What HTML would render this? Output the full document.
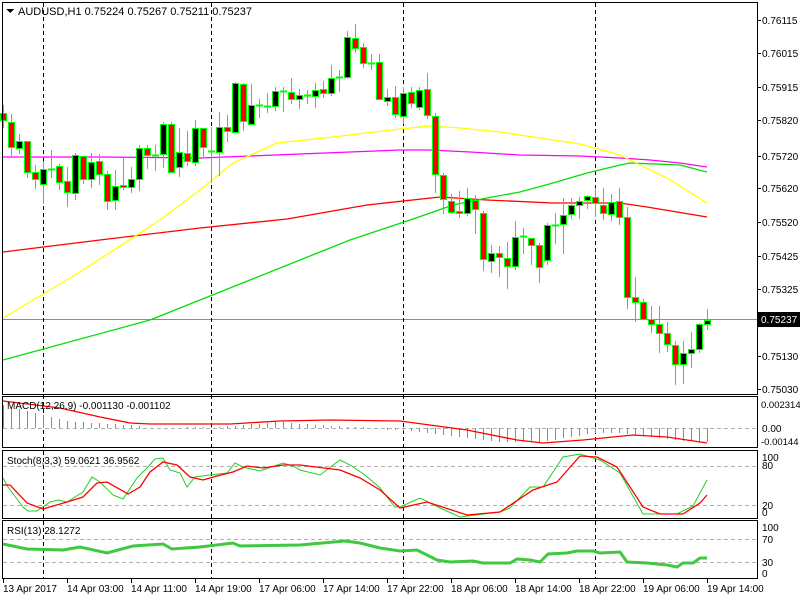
<!DOCTYPE html>
<html><head><meta charset="utf-8"><style>
html,body{margin:0;padding:0;background:#fff;width:800px;height:600px;overflow:hidden}
svg{display:block}
text{font-family:"Liberation Sans",sans-serif;font-size:10px;fill:#000}
</style></head><body>
<svg id="s" width="800" height="600" viewBox="0 0 800 600" xmlns="http://www.w3.org/2000/svg" shape-rendering="crispEdges">
<rect width="800" height="600" fill="#fff"/>
<g id="g"></g>
<g fill="none" stroke="#000" stroke-width="1">
<rect x="2.5" y="2.5" width="755" height="392"/>
<rect x="2.5" y="396.5" width="755" height="51"/>
<rect x="2.5" y="450.5" width="755" height="68"/>
<rect x="2.5" y="520.5" width="755" height="58"/>
</g>
<rect x="758" y="312" width="42" height="15" fill="#000"/>
<text x="761" y="323" style="fill:#fff">0.75237</text>
<g>
<text x="762" y="24">0.76115</text>
<text x="762" y="57">0.76015</text>
<text x="762" y="91">0.75915</text>
<text x="762" y="124">0.75820</text>
<text x="762" y="160">0.75720</text>
<text x="762" y="192">0.75620</text>
<text x="762" y="226">0.75520</text>
<text x="762" y="260">0.75425</text>
<text x="762" y="293">0.75325</text>
<text x="762" y="360">0.75130</text>
<text x="762" y="393">0.75030</text>
<text x="761" y="408" style="font-size:9.5px">0.002314</text>
<text x="762" y="432">0.00</text>
<text x="761" y="445" style="font-size:9.5px">-0.00144</text>
<text x="762" y="461">100</text>
<text x="762" y="469">80</text>
<text x="762" y="509">20</text>
<text x="762" y="516">0</text>
<text x="762" y="531">100</text>
<text x="762" y="543">70</text>
<text x="762" y="566">30</text>
<text x="762" y="577">0</text>
</g>
<g>
<text x="3" y="592">13 Apr 2017</text>
<text x="67" y="592">14 Apr 03:00</text>
<text x="131" y="592">14 Apr 11:00</text>
<text x="195" y="592">14 Apr 19:00</text>
<text x="259" y="592">17 Apr 06:00</text>
<text x="323" y="592">17 Apr 14:00</text>
<text x="387" y="592">17 Apr 22:00</text>
<text x="451" y="592">18 Apr 06:00</text>
<text x="515" y="592">18 Apr 14:00</text>
<text x="579" y="592">18 Apr 22:00</text>
<text x="643" y="592">19 Apr 06:00</text>
<text x="707" y="592">19 Apr 14:00</text>
</g>
<path d="M6 9h8l-4 4z" fill="#000"/>
<text x="18" y="15" style="font-size:11px">AUDUSD,H1  0.75224 0.75267 0.75211 0.75237</text>
<text x="7" y="409">MACD(12,26,9) -0.001130 -0.001102</text>
<text x="7" y="464">Stoch(8,3,3) 59.0621 36.9562</text>
<text x="7" y="534">RSI(13) 28.1272</text>
</svg>
<script>
var NS="http://www.w3.org/2000/svg",g=document.getElementById('g');
function el(t,a){var e=document.createElementNS(NS,t);for(var k in a)e.setAttribute(k,a[k]);g.appendChild(e);return e;}
function pl(pts,c,w,dash){el('polyline',{points:pts.map(function(p){return p.join(',')}).join(' '),fill:'none',stroke:c,'stroke-width':w||1,'stroke-dasharray':dash||'none','shape-rendering':'auto'});}
function hl(y,x1,x2,c){el('line',{x1:x1,x2:x2,y1:y+.5,y2:y+.5,stroke:c,'stroke-dasharray':'4,3'});}
hl(428,3,757,'#b0b0b0');hl(466,3,757,'#b0b0b0');hl(505,3,757,'#b0b0b0');hl(539,3,757,'#b0b0b0');hl(562,3,757,'#b0b0b0');
el('line',{x1:3,x2:757,y1:319.5,y2:319.5,stroke:'#8090a0'});
[43,211,403,595].forEach(function(x){el('line',{x1:x+.5,x2:x+.5,y1:3,y2:578,stroke:'#000','stroke-dasharray':'4,3'});});
[3,67,131,195,259,323,387,451,515,579,643,707].forEach(function(x){el('line',{x1:x+.5,x2:x+.5,y1:579,y2:583,stroke:'#000'});});
[20,53,87,120,156,188,222,256,289,356,389].forEach(function(y){el('line',{x1:758,x2:761,y1:y+.5,y2:y+.5,stroke:'#000'});});
pl([[3,252],[100,240],[200,228],[287,219],[367,205],[440,197],[487,200],[553,203],[620,203],[647,207],[707,217]],'#f00',1.3);
pl([[3,360],[150,320],[250,280],[350,240],[413,219],[453,205],[487,198],[520,192],[553,183],[587,173],[620,165],[630,163],[680,165],[707,172]],'#00e000',1.3);
pl([[3,157],[100,157],[200,158],[250,156],[300,154],[350,152],[400,150],[430,150],[470,152],[520,155],[580,156],[620,158],[650,160],[680,163],[707,167]],'#f0f',1.3);
pl([[3,318],[80,272],[160,220],[200,190],[233,163],[277,143],[333,137],[400,129],[430,126],[460,128],[500,132],[540,138],[580,144],[620,155],[630,160],[667,178],[707,203]],'#ff0',1.3);
var C=[[3,113,120,105,127,'r'],[11,122,147,114,157,'r'],[19,141,148,134,153,'k'],[27,141,172,141,177,'r'],[35,172,179,165,188,'r'],[43,169,184,161,203,'k'],[51,169,169,150,177,'d'],[59,166,182,164,189,'r'],[67,181,192,167,206,'r'],[75,155,193,153,199,'k'],[83,156,179,156,183,'r'],[91,162,179,153,187,'k'],[99,161,174,154,184,'r'],[107,174,201,171,209,'r'],[115,186,200,170,209,'k'],[123,185,187,158,189,'r'],[131,179,187,167,192,'k'],[139,148,179,145,190,'k'],[147,148,155,145,168,'r'],[155,155,155,145,170,'d'],[163,124,154,122,167,'k'],[171,124,172,122,172,'r'],[179,152,167,128,176,'k'],[187,153,161,131,165,'r'],[195,128,162,120,165,'k'],
[203,128,147,128,157,'r'],[211,151,151,127,182,'d'],[219,127,152,112,175,'k'],[227,127,131,115,141,'r'],[235,83,132,82,132,'k'],[243,84,121,83,130,'r'],[251,105,124,84,124,'k'],[259,105,105,99,117,'d'],[267,106,106,93,112,'d'],[275,91,106,87,110,'k'],[283,91,91,87,111,'d'],[291,92,99,78,103,'r'],[299,95,99,89,108,'k'],[307,95,95,90,103,'d'],[315,90,96,83,107,'k'],[323,89,93,81,97,'r'],[331,78,93,65,95,'k'],[339,77,77,70,91,'d'],[347,37,77,31,78,'k'],[355,38,48,24,52,'r'],[363,47,63,43,67,'r'],[371,63,63,54,69,'d'],[379,62,99,54,99,'r'],[387,97,101,89,105,'k'],[395,97,114,86,117,'r'],[403,93,116,87,123,'k'],[411,92,103,87,107,'r'],[419,90,107,87,109,'k'],[427,89,115,73,118,'r'],[435,116,174,113,192,'r'],[443,175,199,173,213,'r'],[451,201,212,194,213,'r'],[459,211,213,191,217,'r'],[467,198,213,188,215,'k'],[475,200,209,195,233,'r'],[483,213,259,211,270,'r'],[491,253,261,245,272,'k'],[499,253,257,246,276,'r'],[507,258,266,242,288,'r'],[515,237,266,221,269,'k'],[523,236,236,228,253,'d'],[531,238,245,238,264,'r'],[539,245,267,243,282,'r'],[547,225,260,223,264,'k'],[555,225,225,213,243,'d'],[563,215,224,198,253,'k'],[571,205,214,198,218,'k'],[579,201,205,197,218,'k'],[587,196,200,195,208,'k'],[595,197,203,188,216,'r'],[603,205,213,188,219,'r'],[611,202,214,194,220,'k'],[619,201,217,188,224,'r'],[627,217,297,207,308,'r'],[635,297,302,277,321,'r'],[643,302,319,299,319,'r'],[651,319,324,306,332,'r'],[659,324,333,306,352,'r'],[667,333,344,322,351,'r'],[675,345,364,341,384,'r'],[683,353,364,341,383,'k'],[691,349,353,332,367,'k'],[699,324,349,323,352,'k'],[707,320,324,309,329,'k']];
C.forEach(function(c){var x=c[0];
el('line',{x1:x+.5,x2:x+.5,y1:c[3],y2:c[4]+1,stroke:'#0f0','stroke-width':1});
if(c[5]=='d'){el('line',{x1:x-3,x2:x+4,y1:c[1]+.5,y2:c[1]+.5,stroke:'#0f0','stroke-width':2});}
else{var h=Math.max(c[2]-c[1],2);el('rect',{x:x-2.5,y:c[1]+.5,width:6,height:h,fill:c[5]=='r'?'#f00':'#000',stroke:'#0f0','stroke-width':1});}
});
function macd(x){var pts=[[3,405],[67,421],[130,425],[150,428],[220,427],[280,422],[330,426],[380,428],[420,431],[470,437],[500,441],[540,441],[570,436],[595,432],[620,432],[650,436],[680,440],[707,441]];
for(var i=0;i<pts.length-1;i++){if(x>=pts[i][0]&&x<=pts[i+1][0]){var t=(x-pts[i][0])/(pts[i+1][0]-pts[i][0]);return pts[i][1]+t*(pts[i+1][1]-pts[i][1]);}}return 428;}
for(var x=3;x<=707;x+=8){var y=Math.round(macd(x));if(y!=428)el('line',{x1:x+.5,x2:x+.5,y1:Math.min(y,428),y2:Math.max(y,428)+(y>428?1:0),stroke:'#40c040'});}
pl([[3,401],[60,408],[100,417],[130,423],[150,424],[230,424],[280,421],[330,420],[400,421],[467,430],[517,440],[543,443],[583,440],[633,435],[667,437],[707,443]],'#f00',1.3);
pl([[3,478],[8,487],[23,507],[28,511],[37,511],[50,502],[58,500],[67,502],[83,492],[92,477],[100,482],[113,495],[123,499],[137,478],[147,468],[155,459],[163,458],[170,470],[180,473],[187,487],[195,477],[210,475],[227,473],[235,463],[243,467],[260,471],[283,463],[293,466],[300,470],[320,475],[340,460],[350,465],[365,475],[380,488],[395,507],[400,507],[420,498],[440,508],[460,517],[500,512],[510,508],[530,487],[543,487],[563,457],[580,454],[600,460],[620,473],[643,514],[677,514],[693,506],[707,480]],'#20d020',1);
pl([[3,485],[10,485],[27,503],[43,509],[67,502],[83,497],[97,483],[107,482],[128,494],[140,487],[150,472],[163,462],[177,465],[190,477],[203,480],[217,476],[233,472],[247,466],[263,468],[283,465],[300,465],[340,470],[360,478],[380,490],[400,508],[427,502],[467,515],[500,512],[533,490],[557,482],[580,456],[597,457],[617,467],[643,507],[660,514],[683,514],[700,503],[707,495]],'#f00',1.3);
pl([[3,544],[27,549],[63,550],[80,547],[107,553],[133,546],[163,544],[172,549],[200,547],[233,543],[240,546],[300,545],[345,541],[360,543],[380,548],[400,551],[417,550],[437,560],[450,562],[473,561],[483,563],[510,563],[517,559],[530,560],[540,562],[548,554],[567,553],[577,551],[593,551],[600,553],[620,552],[627,562],[647,563],[667,565],[677,567],[683,563],[693,563],[700,558],[707,558]],'#40c840',3);
</script>
</body></html>
